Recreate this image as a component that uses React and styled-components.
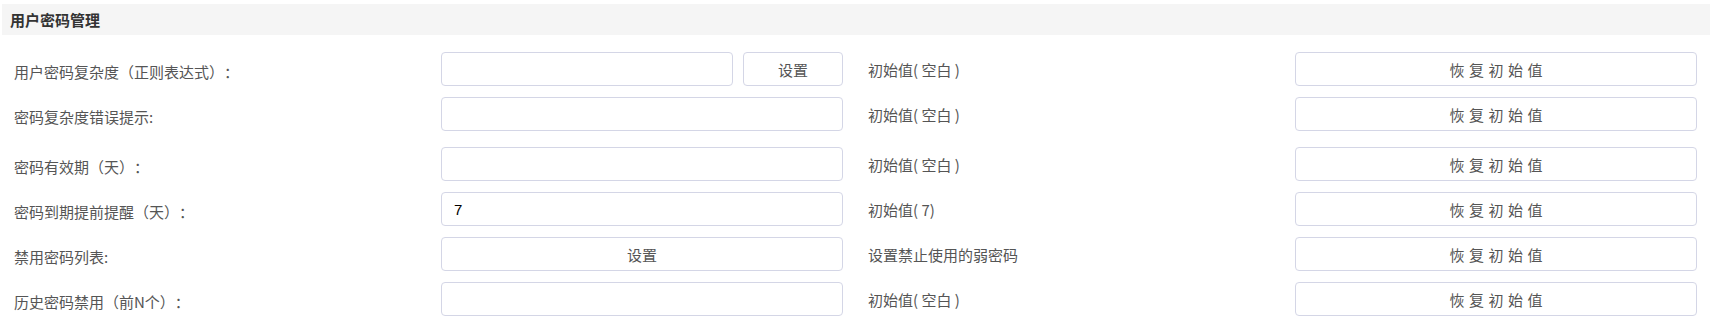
import React from 'react';
import styled, { createGlobalStyle } from 'styled-components';

const GlobalStyle = createGlobalStyle`
  body {
    margin: 0;
    background: #fff;
    font-family: "Noto Sans CJK SC", "Noto Sans", sans-serif;
    text-spacing-trim: space-all;
  }
`;

const Page = styled.div`
  padding: 4px 2px 0 2px;
  width: 1708px;
`;

const SectionTitle = styled.div`
  height: 31px;
  background: #f5f5f5;
  display: flex;
  align-items: center;
  padding-left: 8px;
  font-size: 15px;
  font-weight: bold;
  color: #333;
`;

const Form = styled.div`
  padding-top: 17px;
`;

const Row = styled.div`
  display: grid;
  grid-template-columns: repeat(4, 427px);
  height: 34px;
  margin-bottom: ${(p) => (p.$extra ? 16 : 11)}px;
`;

const Cell = styled.div`
  display: flex;
  align-items: center;
  gap: 10px;
  padding: 0 13px 0 12px;
  min-width: 0;
`;

const Label = styled.span`
  font-size: 15px;
  color: #555;
  padding-top: 4px;
  white-space: nowrap;
`;

const Note = styled.span`
  font-size: 15px;
  color: #555;
  white-space: pre;
`;

const Input = styled.input`
  flex: 1;
  min-width: 0;
  height: 34px;
  box-sizing: border-box;
  border: 1px solid #d4d6e6;
  border-radius: 4px;
  padding: 0 12px;
  font-size: 15px;
  font-family: "Liberation Sans", Arial, sans-serif;
  color: #000;
  outline: none;
`;

const Button = styled.button`
  flex: ${(p) => (p.$fixed ? '0 0 100px' : '1')};
  height: 34px;
  box-sizing: border-box;
  border: 1px solid #d4d6e6;
  border-radius: 4px;
  background: #fff;
  font-family: "Noto Sans CJK SC", sans-serif;
  font-size: 15px;
  color: #555;
  letter-spacing: ${(p) => (p.$spaced ? '4.5px' : '0')};
  text-indent: ${(p) => (p.$spaced ? '4.5px' : '0')};
  padding: 0;
  cursor: pointer;
`;

const rows = [
  { label: '用户密码复杂度（正则表达式）：', kind: 'inputBtn', note: '初始值( 空白 )' },
  { label: '密码复杂度错误提示:', kind: 'input', note: '初始值( 空白 )', extra: true },
  { label: '密码有效期（天）：', kind: 'input', note: '初始值( 空白 )' },
  { label: '密码到期提前提醒（天）：', kind: 'input', value: '7', note: '初始值( 7)' },
  { label: '禁用密码列表:', kind: 'button', note: '设置禁止使用的弱密码' },
  { label: '历史密码禁用（前N个）：', kind: 'input', note: '初始值( 空白 )' },
];

export default function App() {
  return (
    <Page>
      <GlobalStyle />
      <SectionTitle>用户密码管理</SectionTitle>
      <Form>
        {rows.map((r, i) => (
          <Row key={i} $extra={r.extra}>
            <Cell>
              <Label>{r.label}</Label>
            </Cell>
            <Cell>
              {r.kind === 'button' ? (
                <Button>设置</Button>
              ) : (
                <Input defaultValue={r.value || ''} />
              )}
              {r.kind === 'inputBtn' && <Button $fixed>设置</Button>}
            </Cell>
            <Cell>
              <Note>{r.note}</Note>
            </Cell>
            <Cell>
              <Button $spaced>恢复初始值</Button>
            </Cell>
          </Row>
        ))}
      </Form>
    </Page>
  );
}
